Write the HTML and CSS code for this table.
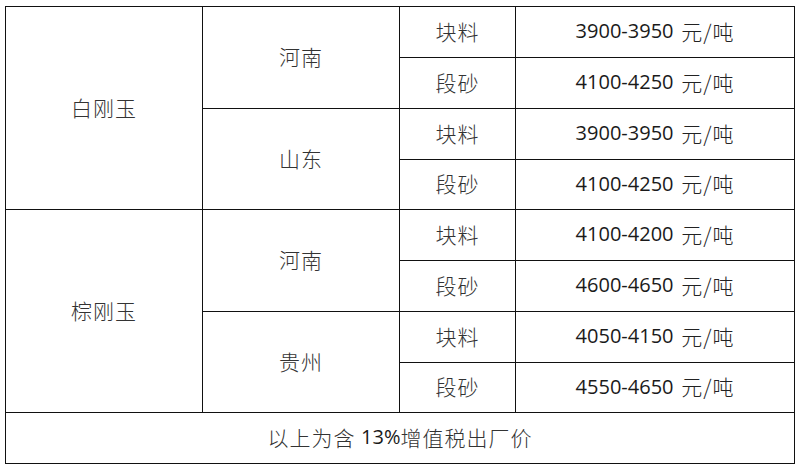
FILE: index.html
```html
<!DOCTYPE html>
<html lang="zh-CN">
<head>
<meta charset="utf-8">
<title>刚玉价格</title>
<link rel="stylesheet" href="styles.css">
</head>
<body>
<div class="table">
  <div class="cell c-type r1-4">白刚玉</div>
  <div class="cell c-region r1-2">河南</div>
  <div class="cell c-kind">块料</div>
  <div class="cell c-price"><span class="num">3900-3950</span> 元/吨</div>
  <div class="cell c-kind">段砂</div>
  <div class="cell c-price"><span class="num">4100-4250</span> 元/吨</div>
  <div class="cell c-region r3-4">山东</div>
  <div class="cell c-kind">块料</div>
  <div class="cell c-price"><span class="num">3900-3950</span> 元/吨</div>
  <div class="cell c-kind">段砂</div>
  <div class="cell c-price"><span class="num">4100-4250</span> 元/吨</div>

  <div class="cell c-type r5-8">棕刚玉</div>
  <div class="cell c-region r5-6">河南</div>
  <div class="cell c-kind">块料</div>
  <div class="cell c-price"><span class="num">4100-4200</span> 元/吨</div>
  <div class="cell c-kind">段砂</div>
  <div class="cell c-price"><span class="num">4600-4650</span> 元/吨</div>
  <div class="cell c-region r7-8">贵州</div>
  <div class="cell c-kind">块料</div>
  <div class="cell c-price"><span class="num">4050-4150</span> 元/吨</div>
  <div class="cell c-kind">段砂</div>
  <div class="cell c-price"><span class="num">4550-4650</span> 元/吨</div>

  <div class="cell footer">以上为含 <span class="num pct">13%</span>增值税出厂价</div>
</div>
</body>
</html>
```
FILE: styles.css
```css
html, body {
  margin: 0;
  padding: 0;
  background: #ffffff;
}
body {
  padding: 6px 0 0 5px;
  font-family: "Noto Sans CJK SC", "Noto Sans", sans-serif;
  font-weight: 300;
  font-size: 21px;
  color: #333333;
}
.table {
  display: grid;
  width: 788px;
  grid-template-columns: 196px 196px 115px 278px;
  grid-template-rows: 50px 50px 50px 49px 50px 50px 50px 49px 50px;
  gap: 1px;
  padding: 1px;
  background: #111111;
}
.cell {
  background: #ffffff;
  display: flex;
  align-items: center;
  justify-content: center;
  padding-bottom: 3px;
  letter-spacing: 1px;
  white-space: pre;
}
.c-type { grid-column: 1; }
.c-region { grid-column: 2; }
.c-kind { grid-column: 3; }
.c-price { grid-column: 4; color: #222; }
.r1-4 { grid-row: 1 / span 4; }
.r5-8 { grid-row: 5 / span 4; }
.r1-2 { grid-row: 1 / span 2; }
.r3-4 { grid-row: 3 / span 2; }
.r5-6 { grid-row: 5 / span 2; }
.r7-8 { grid-row: 7 / span 2; }
.footer { grid-column: 1 / span 4; }
.num {
  font-family: "Open Sans", sans-serif;
  font-weight: 400;
  font-size: 20px;
  letter-spacing: 0;
  margin-right: 2px;
  color: #1a1a1a;
}
.num.pct {
  margin-right: 0;
}
```
